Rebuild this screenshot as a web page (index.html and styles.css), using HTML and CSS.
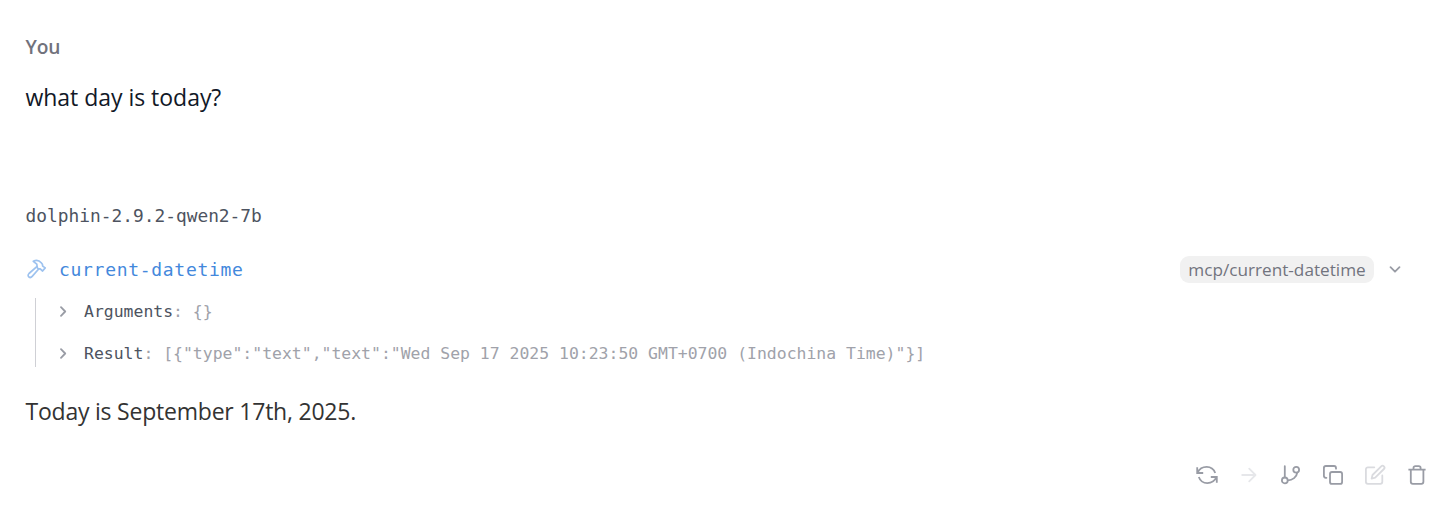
FILE: index.html
```html
<!DOCTYPE html>
<html lang="en">
<head>
<meta charset="utf-8">
<title>Chat</title>
<link rel="stylesheet" href="styles.css">
</head>
<body>
<main class="chat">
  <section class="message user">
    <h2 class="author">You</h2>
    <p class="text question">what day is today?</p>
  </section>
  <section class="message assistant">
    <h2 class="model">dolphin-2.9.2-qwen2-7b</h2>
    <div class="tool-head">
      <svg class="hammer" viewBox="0 0 20 20" width="20" height="20"><path d="M6.3 2.3C9.1.8 12.2 1.4 14.2 3.8L15.4 5.3 15.7 7.1 18.2 8.9 15.6 12 13.2 9.8 11.6 9.8 10.3 8.8 9.8 5.2 6.3 2.3Z"/><path d="M9.8 7.7L2 14.5C.7 15.7 1 17.3 2 18 3.1 18.9 4.3 18.4 5.2 17.4L11.9 9.8"/></svg>
      <span class="tool-name">current-datetime</span>
      <span class="badge">mcp/current-datetime</span>
      <svg class="chevron" viewBox="0 0 12 12" width="12" height="12"><path d="M1.5 4.2L6 8.7 10.5 4.2"/></svg>
    </div>
    <div class="tool-body">
      <div class="row"><svg class="chevron" viewBox="0 0 12 12" width="12" height="12"><path d="M4 1.2L8.2 5.5 4 9.8"/></svg><code><span class="key">Arguments</span>: {}</code></div>
      <div class="row"><svg class="chevron" viewBox="0 0 12 12" width="12" height="12"><path d="M4 1.2L8.2 5.5 4 9.8"/></svg><code><span class="key">Result</span>: [{"type":"text","text":"Wed Sep 17 2025 10:23:50 GMT+0700 (Indochina Time)"}]</code></div>
    </div>
    <p class="text answer">Today is September 17th, 2025.</p>
  </section>
  <footer class="actions">
    <svg class="sharp" viewBox="0 0 24 24"><path d="M2.2 4.2V10H8.2M2.5 9.8C4.5 5.5 8 3.9 11.7 3.9 15.8 3.9 18.8 6.2 20.2 10M21.8 19.8V14H15.8M21.5 14.2C19.5 18.5 16 20.1 12.3 20.1 8.2 20.1 5.2 17.8 3.8 14"/></svg>
    <svg class="disabled" viewBox="0 0 24 24"><path d="M5.2 12H18.4M12.2 5.7L18.5 12 12.2 18.3"/></svg>
    <svg viewBox="0 0 24 24"><path d="M5.8 3.2V14.3M18.2 9.7C17.8 14 13.5 17.4 8.8 17.4"/><circle cx="5.8" cy="17.4" r="2.9"/><circle cx="17.2" cy="6.8" r="2.9"/></svg>
    <svg viewBox="0 0 24 24"><rect x="9" y="9" width="12.1" height="11.9" rx="2"/><path d="M5.4 14.8H4.8A2 2 0 0 1 2.9 12.8V4.9A2 2 0 0 1 4.9 3H13A2 2 0 0 1 15 5V5.7"/></svg>
    <svg class="disabled edit" viewBox="0 0 24 24"><path d="M11.3 4.3H4.9A2 2 0 0 0 2.9 6.3V18.8A2 2 0 0 0 4.9 20.8H17.3A2 2 0 0 0 19.3 18.8V12.5M18.2 3.3A1.9 1.9 0 0 1 20.9 6L12.2 14.7 8.6 15.6 9.5 12Z"/></svg>
    <svg class="sharp" viewBox="0 0 24 24"><path d="M3.4 6.7H20.6M5.8 6.8V18.8A2 2 0 0 0 7.8 20.8H16.4A2 2 0 0 0 18.4 18.8V6.8M8.5 6.7V5A1.8 1.8 0 0 1 10.3 3.2H13.8A1.8 1.8 0 0 1 15.6 5V6.7"/></svg>
  </footer>
</main>
</body>
</html>
```
FILE: styles.css
```css
* { box-sizing: border-box; }
body { margin: 0; background: #fff; font-family: "Open Sans", "Noto Sans", sans-serif; }
h2, p { margin: 0; font-weight: 400; white-space: nowrap; }
svg { display: block; flex: none; fill: none; stroke: #999ca5; stroke-width: 1.8; stroke-linecap: round; stroke-linejoin: round; }
.chat { width: 1455px; height: 526px; padding: 32px 26px 0 25.5px; display: flex; flex-direction: column; }
.author { height: 30px; line-height: 30px; font-size: 19.2px; font-weight: 600; letter-spacing: -.2px; color: #71727c; }
.text { font-size: 23px; line-height: 34px; }
.question { margin-top: 18px; color: #111827; letter-spacing: -.03px; }
.assistant { margin-top: 87px; }
.model { height: 30px; line-height: 30px; font-family: "DejaVu Sans Mono", monospace; font-size: 17.85px; color: #4d5360; }
.tool-head { height: 28px; margin-top: 24px; padding: 0 28px 0 1.5px; display: flex; align-items: center; }
.hammer { stroke: #9dc2ef; stroke-width: 1.7; }
.tool-name { margin-left: 12px; margin-right: auto; font-family: "DejaVu Sans Mono", monospace; font-size: 18px; letter-spacing: .7px; color: #4388dc; }
.badge { width: 194px; height: 27px; line-height: 27px; border-radius: 9px; background: #f1f1f1; color: #71747e; text-align: center; font-size: 17.2px; margin-right: 15px; }
.tool-body { height: 69px; margin: 15px 0 0 9.5px; padding-left: 21px; border-left: 1px solid #cfd0d5; display: flex; flex-direction: column; justify-content: space-between; }
.row { height: 27px; display: flex; align-items: center; }
.row code { margin-left: 15px; font-family: "DejaVu Sans Mono", monospace; font-size: 16.45px; line-height: 27px; color: #a0a2aa; white-space: pre; }
.key { color: #4d5360; }
.answer { margin-top: 27px; color: #333; letter-spacing: -.22px; }
.actions { display: flex; justify-content: flex-end; gap: 18px; margin: 35px .5px 0 0; }
.actions svg { width: 24px; height: 24px; }
.actions .sharp { stroke-linecap: butt; stroke-linejoin: miter; }
.actions .disabled { stroke: #e6e7ea; }
.actions .edit { stroke: #dadbdf; }
```
